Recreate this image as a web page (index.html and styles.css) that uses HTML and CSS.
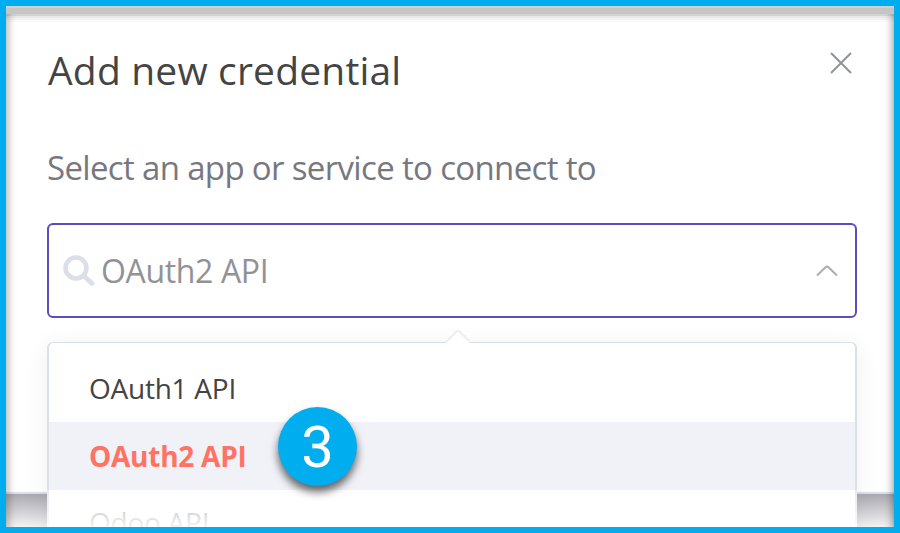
FILE: index.html
```html
<!DOCTYPE html>
<html lang="en">
<head>
<meta charset="utf-8">
<title>Add new credential</title>
<link rel="stylesheet" href="styles.css">
</head>
<body>
<div class="frame">
  <section class="modal">
    <header class="modal-header">
      <h1 class="title">Add new credential</h1>
      <svg class="close" width="22" height="22" viewBox="0 0 22 22"><path d="M1 1L21 21M21 1L1 21"/></svg>
    </header>
    <p class="subtitle">Select an app or service to connect to</p>
    <div class="select">
      <svg class="search" width="32" height="32" viewBox="0 0 32 32"><circle cx="13" cy="13" r="10.5"/><path d="M21 21L29 28.5"/></svg>
      <span class="value">OAuth2 API</span>
      <svg class="chevron" width="22" height="12" viewBox="0 0 22 12"><path d="M1 10.5L9.5 2.3Q11 1 12.5 2.3L21 10.5"/></svg>
      <div class="dropdown">
        <svg class="arrow" width="26" height="14" viewBox="0 0 26 14"><path class="arrow-fill" d="M1 14L13 2L25 14Z"/><path class="arrow-line" d="M1 13L11.5 2.5Q13 1 14.5 2.5L25 13"/></svg>
        <ul class="options">
          <li class="option">OAuth1 API</li>
          <li class="option selected">OAuth2 API</li>
          <li class="option faded">Odoo API</li>
        </ul>
      </div>
    </div>
  </section>
  <div class="badge">3</div>
</div>
</body>
</html>
```
FILE: styles.css
```css
* { box-sizing: border-box; }
body { margin: 0; font-family: "Open Sans", "Noto Sans", sans-serif; }
.frame {
  position: relative;
  width: 900px;
  height: 533px;
  border: 6px solid #00adef;
  overflow: hidden;
  background: linear-gradient(#aaa9b0 488px, #f3f3f5 521px);
}
.frame::after {
  content: "";
  position: absolute;
  inset: 0;
  pointer-events: none;
  background:
    linear-gradient(90deg, rgba(0,0,0,.2), rgba(0,0,0,.13) 3px, rgba(0,0,0,.03) 7px, transparent 11px) 0 8px no-repeat,
    linear-gradient(270deg, rgba(0,0,0,.26), rgba(0,0,0,.13) 3px, rgba(0,0,0,.03) 7px, transparent 11px) 0 8px no-repeat,
    linear-gradient(#d2cfd2 0 2px, #c5c5c5 2px 8px, #d3d3d3 8px 10px, #e8e8e8 10px 12px, #f2f2f2 12px 14px, #fafafa 14px 16px, transparent 16px) 0 0 / 100% 18px no-repeat;
}
.modal {
  height: 488px;
  padding: 36px 37px 0 41px;
  background: #fff;
  border-bottom: 2px solid #dbdfe7;
}
.modal-header { display: flex; justify-content: space-between; align-items: flex-start; height: 99px; }
.title { margin: 0 0 0 1px; font-size: 39px; line-height: 56px; font-weight: 400; letter-spacing: .18px; color: #444; white-space: nowrap; }
.subtitle { margin: 0; height: 82px; font-size: 33px; line-height: 54px; letter-spacing: -.66px; color: #77787f; white-space: nowrap; }
.close { margin: 10px 5px 0 0; fill: none; stroke: #909399; stroke-width: 2; }
.select {
  position: relative;
  display: flex;
  align-items: center;
  width: 810px;
  height: 95px;
  padding: 0 17px 0 14px;
  border: 2px solid #5b4cc0;
  border-radius: 6px;
}
.search { fill: none; stroke: #dbdfe9; stroke-width: 4.6; stroke-linecap: round; }
.value { flex: 1; margin-left: 6px; font-size: 32px; line-height: 44px; letter-spacing: -.35px; color: #919298; white-space: nowrap; }
.chevron { fill: none; stroke: #acaeb2; stroke-width: 2; }
.dropdown {
  position: absolute;
  top: 117px;
  left: -2px;
  width: 810px;
  height: 200px;
  border: 2px solid #dbdfea;
  border-top-width: 1px;
  border-radius: 6px 6px 0 0;
  background: #fff;
  box-shadow: 0 4px 24px rgba(0,0,0,.07);
}
.dropdown::after {
  content: "";
  position: absolute;
  left: -2px;
  right: -2px;
  top: 147px;
  height: 38px;
  background: linear-gradient(rgba(255,255,255,.3), rgba(255,255,255,.92));
}
.arrow { position: absolute; left: 396px; top: -14px; }
.arrow-fill { fill: #fff; }
.arrow-line { fill: none; stroke: #eceef2; stroke-width: 2; }
.options { list-style: none; margin: 0; padding: 11px 0 0; }
.option { height: 68px; padding-left: 40px; font-size: 28px; line-height: 68px; letter-spacing: -.25px; color: #444; white-space: nowrap; }
.selected { background: #f0f2f8; color: #ff7264; font-weight: 700; }
.faded { line-height: 65px; color: #888; }
.badge {
  position: absolute;
  left: 272px;
  top: 401px;
  width: 79px;
  height: 79px;
  border-radius: 50%;
  background: #00adef;
  color: #fff;
  font-family: Roboto, sans-serif;
  font-size: 58px;
  line-height: 81px;
  text-align: center;
  box-shadow: 0 6px 8px rgba(0,0,0,.6);
}
```
